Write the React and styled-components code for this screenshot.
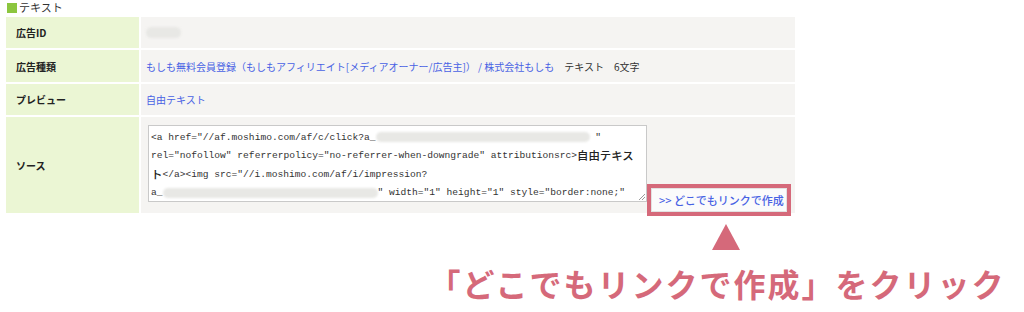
import React from 'react';
import styled, { createGlobalStyle } from 'styled-components';

const GlobalStyle = createGlobalStyle`
  body {
    margin: 0;
    background: #ffffff;
    font-family: "Noto Sans CJK JP", "Noto Sans", sans-serif;
    color: #333333;
  }
`;

const Page = styled.div`
  width: 1024px;
  height: 312px;
  overflow: hidden;
  padding: 0 6px;
  box-sizing: border-box;
`;

const SectionTitle = styled.div`
  display: flex;
  align-items: center;
  gap: 2px;
  height: 15px;
  padding-left: 1px;
  font-size: 11px;
  line-height: 15px;
  color: #333333;
`;

const Square = styled.span`
  display: inline-block;
  width: 10px;
  height: 10px;
  background: #8cc63f;
`;

const InfoGrid = styled.div`
  display: grid;
  grid-template-columns: 133px 654px;
  grid-template-rows: 31px 32px 31px 96px;
  gap: 2px;
  margin-top: 2px;
`;

const Label = styled.div`
  display: flex;
  align-items: center;
  padding-left: 10px;
  background: #ebf6d4;
  font-size: 10px;
  font-weight: 700;
  color: #222222;
`;

const Value = styled.div`
  display: flex;
  align-items: center;
  padding-left: 5px;
  background: #f5f4f2;
  font-size: 10px;
  white-space: nowrap;
`;

const SourceValue = styled(Value)`
  align-items: flex-end;
  padding: 8px 0 0 7px;
`;

const Link = styled.a`
  color: #4862e4;
  text-decoration: none;
`;

const Plain = styled.span`
  margin-left: 10px;
  color: #333333;
`;

const Blurred = styled.span`
  display: inline-block;
  width: ${p => p.$w}px;
  height: ${p => p.$h || 10}px;
  border-radius: 6px;
  background: #e8e8e5;
  filter: blur(1.2px);
`;

const CodeBox = styled.div`
  position: relative;
  align-self: flex-start;
  width: 499px;
  height: 77px;
  box-sizing: border-box;
  padding: 2px 0 0 2px;
  border: 1px solid #c9c9c9;
  background: #ffffff;
  overflow: hidden;
  font-family: "Liberation Mono", "DejaVu Sans Mono", monospace;
  font-size: 9.6px;
  color: #333333;
  white-space: pre;
`;

const CodeLine = styled.div`
  display: flex;
  align-items: center;
  height: 18.5px;
  line-height: 13px;
`;

const Wide = styled.span`
  font-family: "Noto Sans CJK JP", sans-serif;
  font-size: 11.4px;
  font-weight: 500;
  line-height: 13px;
  color: #222222;
`;

const Grip = styled.svg`
  position: absolute;
  right: 1px;
  bottom: 1px;
`;

const Highlight = styled.div`
  width: 144px;
  height: 32px;
  margin-bottom: -3px;
  box-sizing: border-box;
  border: 4px solid #d5697a;
  display: flex;
`;

const MakeLinkButton = styled.button`
  flex: 1;
  margin: 0;
  padding: 0 0 0 7px;
  border: 1px solid #e2e2e2;
  background: #fbfbfb;
  text-align: left;
  font-family: "Noto Sans CJK JP", sans-serif;
  font-size: 11px;
  font-weight: 500;
  color: #4862e4;
  cursor: pointer;
`;

const Annotation = styled.div`
  display: flex;
  flex-direction: column;
  align-items: center;
  width: 600px;
  margin-left: 411px;
`;

const Arrow = styled.div`
  width: 0;
  height: 0;
  margin-top: 11px;
  margin-left: 18px;
  border-left: 14px solid transparent;
  border-right: 14px solid transparent;
  border-bottom: 26px solid #d5697a;
`;

const Caption = styled.div`
  margin-top: 14px;
  font-size: 32px;
  font-weight: 700;
  line-height: 38px;
  letter-spacing: 2px;
  color: #d5697a;
  white-space: nowrap;
`;

export default function App() {
  return (
    <Page>
      <GlobalStyle />
      <SectionTitle>
        <Square />
        テキスト
      </SectionTitle>

      <InfoGrid>
        <Label>広告ID</Label>
        <Value>
          <Blurred $w={35} $h={11} />
        </Value>

        <Label>広告種類</Label>
        <Value>
          <Link href="#">もしも無料会員登録（もしもアフィリエイト[メディアオーナー/広告主]） / 株式会社もしも</Link>
          <Plain>テキスト</Plain>
          <Plain>6文字</Plain>
        </Value>

        <Label>プレビュー</Label>
        <Value>
          <Link href="#">自由テキスト</Link>
        </Value>

        <Label>ソース</Label>
        <SourceValue>
          <CodeBox>
            <CodeLine>{'<a href="//af.moshimo.com/af/c/click?a_'}<Blurred $w={214} />{' "'}</CodeLine>
            <CodeLine>{'rel="nofollow" referrerpolicy="no-referrer-when-downgrade" attributionsrc>'}<Wide>自由テキス</Wide></CodeLine>
            <CodeLine><Wide>ト</Wide>{'</a><img src="//i.moshimo.com/af/i/impression?'}</CodeLine>
            <CodeLine>{'a_'}<Blurred $w={215} />{'" width="1" height="1" style="border:none;"'}</CodeLine>
            <CodeLine>{'loading="lazy">'}</CodeLine>
            <Grip width="7" height="7" viewBox="0 0 7 7">
              <path d="M1 7 L7 1 M4 7 L7 4" stroke="#9a9a9a" strokeWidth="1" />
            </Grip>
          </CodeBox>
          <Highlight>
            <MakeLinkButton>{'>> どこでもリンクで作成'}</MakeLinkButton>
          </Highlight>
        </SourceValue>
      </InfoGrid>

      <Annotation>
        <Arrow />
        <Caption>「どこでもリンクで作成」をクリック</Caption>
      </Annotation>
    </Page>
  );
}
